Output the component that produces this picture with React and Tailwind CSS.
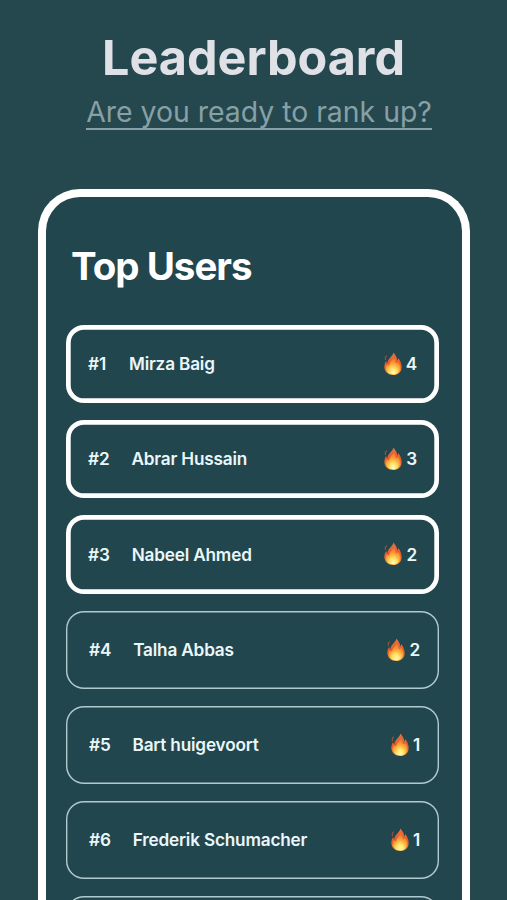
import { useId } from 'react';

const users = [
    { rank: 1, name: 'Mirza Baig', streak: 4 },
    { rank: 2, name: 'Abrar Hussain', streak: 3 },
    { rank: 3, name: 'Nabeel Ahmed', streak: 2 },
    { rank: 4, name: 'Talha Abbas', streak: 2 },
    { rank: 5, name: 'Bart huigevoort', streak: 1 },
    { rank: 6, name: 'Frederik Schumacher', streak: 1 },
];

const Flame = () => {
    const id = useId();

    return (
        <svg width="20" height="24" viewBox="0 0 20 24" className="shrink-0">
            <defs>
                <linearGradient id={`${id}-outer`} x1="0" y1="0" x2="0" y2="1">
                    <stop offset="0" stopColor="#d9764a" />
                    <stop offset="0.5" stopColor="#ea5a28" />
                    <stop offset="1" stopColor="#f79a35" />
                </linearGradient>
                <radialGradient id={`${id}-inner`} cx="0.5" cy="0.92" r="0.85">
                    <stop offset="0" stopColor="#fffbc4" />
                    <stop offset="0.3" stopColor="#ffe566" />
                    <stop offset="0.6" stopColor="#fba338" />
                    <stop offset="1" stopColor="#f0642a" />
                </radialGradient>
            </defs>
            <path
                d="M10.4 .6C12.2 3 13.9 5.2 14.4 8.4C14.9 7.8 15.2 7 15.2 6.1C17.4 8.8 18.8 12 18.6 15.4C18.4 20 14.8 23 10.2 23C5.2 23 1.6 19.8 1.4 15.3C1.3 12.7 2 10.7 3.1 9C3.3 10 3.6 10.8 4.2 11.4C4.6 8 6.4 6.2 8.2 4.4C9.5 3.1 10.3 2.1 10.4 .6Z"
                fill={`url(#${id}-outer)`}
            />
            <path
                d="M10.7 4C12.6 7.6 12.2 10 13.4 11.6C14.2 11.1 14.7 10.3 14.9 9.4C16.7 11.8 17.5 14.2 17.1 16.7C16.5 20.4 13.7 22.5 10.1 22.5C6.5 22.5 3.4 20.2 3 16.8C2.8 14.9 3.3 13.3 4.1 12.2C4.6 13 5.3 13.5 6.2 13.6C6.2 9.6 10.2 8.6 10.7 4Z"
                fill={`url(#${id}-inner)`}
            />
            <path d="M2.6 7.6C1.8 6.4 2.2 4.9 3.6 4" fill="none" stroke="#a3523f" strokeWidth="1.1" strokeLinecap="round" />
        </svg>
    );
};

const rowStyle = (rank) => (
    rank <= 3
        ? 'shadow-[inset_0_0_0_4.7px_#ffffff] pl-[22px] pr-[22px]'
        : 'shadow-[inset_0_0_0_1.4px_#b0cbd0] pl-[23px] pr-[19px]'
);

const UserRow = ({ user }) => (
    <li className={`flex h-[78.2px] shrink-0 items-center rounded-[18px] text-[17.2px] font-semibold tracking-[-0.18px] text-[#eaf7fa] ${rowStyle(user.rank)}`}>
        <span>#{user.rank}</span>
        <span className={user.rank === 1 ? 'ml-[23px]' : 'ml-[22px]'}>{user.name}</span>
        <div className="ml-auto flex items-center gap-[3px]">
            <Flame />
            <span>{user.streak}</span>
        </div>
    </li>
);

const App = () => (
    <main className="flex h-[900px] w-[507px] flex-col overflow-hidden bg-[#25474e] font-['Inter',sans-serif] whitespace-nowrap">
        <header className="flex h-[189px] shrink-0 flex-col items-center pt-[28px]">
            <h1 className="text-[48.5px] leading-[60px] font-bold text-[#dfe1e7]">Leaderboard</h1>
            <p className="ml-[11px] h-[42px] border-b-2 border-[#86a0a6] text-[28.4px] leading-[48px] font-normal text-[#86a0a6]">Are you ready to rank up?</p>
        </header>

        <section className="ml-[38px] flex h-[800px] w-[432px] shrink-0 flex-col rounded-t-[42px] border-8 border-b-0 border-white bg-[#22464d] pt-[46px] pr-[23px] pl-[20px]">
            <h2 className="ml-[5px] h-[82px] text-[38.5px] leading-[47px] font-bold tracking-[-1px] text-white">Top Users</h2>
            <ul className="flex flex-col gap-[17px]">
                {users.map(user => (
                    <UserRow key={user.rank} user={user} />
                ))}
                <li className="h-[78.2px] shrink-0 rounded-[18px] shadow-[inset_0_0_0_1.4px_#b0cbd0]" />
            </ul>
        </section>
    </main>
);

export default App;
